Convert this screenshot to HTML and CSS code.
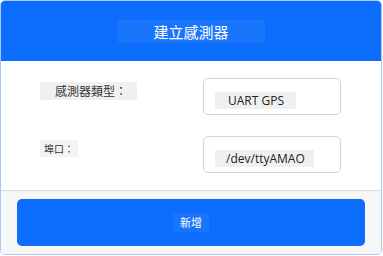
FILE: index.html
```html
<!DOCTYPE html>
<html lang="zh-Hant">
<head>
<meta charset="utf-8">
<link rel="stylesheet" href="styles.css">
</head>
<body>
<div class="card">
  <div class="card-header">
    <span class="title">建立感測器</span>
  </div>
  <div class="card-body">
    <div class="row">
      <span class="label label-lg">感測器類型：</span>
      <div class="field"><span class="value v1">UART GPS</span></div>
    </div>
    <div class="row">
      <span class="label label-sm">埠口：</span>
      <div class="field"><span class="value v2">/dev/ttyAMAO</span></div>
    </div>
  </div>
  <div class="card-footer">
    <button class="btn"><span class="btn-text">新增</span></button>
  </div>
</div>
</body>
</html>
```

FILE: styles.css
```css
html, body {
  margin: 0;
  padding: 0;
  background: #ffffff;
}
body {
  font-family: "Open Sans", "Noto Sans CJK TC", sans-serif;
}
.card {
  width: 382px;
  height: 255px;
  box-sizing: border-box;
  border: 1px solid #a9c8f7;
  border-radius: 5px;
  overflow: hidden;
  display: flex;
  flex-direction: column;
  background: #fff;
}
.card-header {
  height: 60px;
  background: #0d6efd;
  display: flex;
  justify-content: center;
  align-items: flex-start;
  padding-top: 19px;
  box-sizing: border-box;
  flex-shrink: 0;
}
.title {
  width: 147px;
  height: 23px;
  background: #1a75fd;
  color: #fff;
  font-family: "Noto Sans CJK TC", sans-serif;
  font-size: 15px;
  line-height: 23px;
  text-align: center;
}
.card-body {
  flex: 1;
  padding: 17px 0 0 39px;
  display: flex;
  flex-direction: column;
  gap: 21px;
}
.row {
  display: flex;
  align-items: flex-start;
}
.label {
  background: #f0f0f0;
  color: #333;
  font-family: "Noto Sans CJK TC", sans-serif;
  margin-top: 4px;
  box-sizing: border-box;
}
.label-lg {
  width: 97px;
  height: 18px;
  font-size: 12px;
  line-height: 18px;
  padding-left: 15px;
}
.label-sm {
  width: 38px;
  height: 17px;
  font-size: 10px;
  line-height: 17px;
  padding-left: 4px;
  background: #f3f3f3;
}
.row .field {
  margin-left: auto;
  margin-right: 40px;
}
.field {
  width: 138px;
  height: 37px;
  box-sizing: border-box;
  border: 1px solid #d4d4d4;
  border-radius: 5px;
  padding: 9px 0 0 11px;
}
.value {
  display: inline-block;
  background: #f0f0f0;
  color: #222;
  font-size: 12px;
  line-height: 17px;
  height: 17px;
  box-sizing: border-box;
}
.v1 {
  width: 81px;
  padding-left: 13px;
}
.v2 {
  width: 99px;
  padding-left: 11px;
}
.card-footer {
  height: 64px;
  box-sizing: border-box;
  background: #f7f7f7;
  border-top: 1px solid #dcdcdc;
  padding: 8px 16px 0 16px;
  flex-shrink: 0;
}
.btn {
  width: 348px;
  height: 47px;
  border: none;
  border-radius: 5px;
  background: #0d6efd;
  display: flex;
  justify-content: center;
  align-items: center;
  padding: 0;
  margin: 0;
}
.btn-text {
  background: #1a75fd;
  color: #fff;
  font-family: "Noto Sans CJK TC", sans-serif;
  font-size: 11px;
  line-height: 19px;
  height: 19px;
  width: 36px;
  text-align: center;
}
```
